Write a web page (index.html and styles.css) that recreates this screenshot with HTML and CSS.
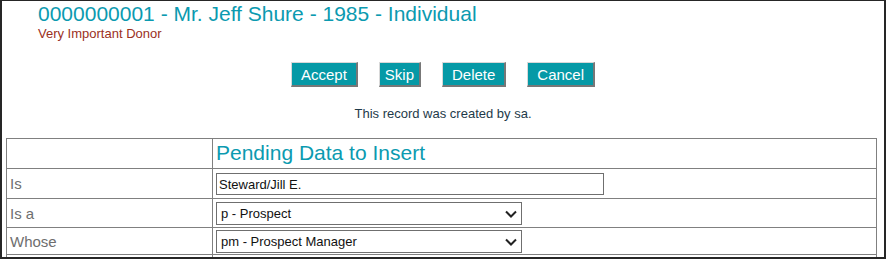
FILE: index.html
```html
<!DOCTYPE html>
<html lang="en">
<head>
    <meta charset="UTF-8">
    <title>Pending Record</title>
    <link rel="stylesheet" href="styles.css">
</head>
<body>
    <div class="frame">
        <div class="header">
            <h1 class="title">0000000001 - Mr. Jeff Shure - 1985 - Individual</h1>
            <div class="subtitle">Very Important Donor</div>
        </div>

        <div class="actions">
            <button class="btn">Accept</button>
            <button class="btn btn-narrow">Skip</button>
            <button class="btn">Delete</button>
            <button class="btn">Cancel</button>
        </div>

        <p class="created">This record was created by sa.</p>

        <table class="pending">
            <tr>
                <td class="label-col"></td>
                <td class="heading">Pending Data to Insert</td>
            </tr>
            <tr>
                <td class="label">Is</td>
                <td><input type="text" class="field" value="Steward/Jill E."></td>
            </tr>
            <tr class="select-row">
                <td class="label">Is a</td>
                <td>
                    <select class="picker">
                        <option>p - Prospect</option>
                        <option>d - Donor</option>
                    </select>
                </td>
            </tr>
            <tr class="select-row tight">
                <td class="label">Whose</td>
                <td>
                    <select class="picker">
                        <option>pm - Prospect Manager</option>
                        <option>sm - Stewardship Manager</option>
                    </select>
                </td>
            </tr>
            <tr>
                <td class="label"></td>
                <td></td>
            </tr>
        </table>
    </div>
</body>
</html>
```

FILE: styles.css
```css
body {
    margin: 0;
    padding: 0;
    background-color: #fff;
    font-family: "Liberation Sans", Arial, sans-serif;
}
.frame {
    height: 259px;
    box-sizing: border-box;
    border: 2px solid #262626;
    border-top-width: 1px;
    overflow: hidden;
}
.header {
    padding: 1px 0 0 36px;
}
.title {
    margin: 0;
    font-size: 21px;
    line-height: 24px;
    font-weight: normal;
    color: #0b9ab0;
}
.subtitle {
    font-size: 13px;
    line-height: 15px;
    color: #9b3022;
}
.actions {
    display: flex;
    justify-content: center;
    gap: 21px;
    margin-top: 21px;
}
.btn {
    height: 25px;
    padding: 0 9px;
    background-color: #0599a6;
    color: #fff;
    font-family: "Liberation Sans", Arial, sans-serif;
    font-size: 15px;
    border-top: 1px solid #d8d8d8;
    border-left: 1px solid #d8d8d8;
    border-right: 2px solid #777;
    border-bottom: 2px solid #777;
    cursor: pointer;
}
.btn-narrow {
    padding: 0 5px;
}
.created {
    margin: 19px 0 0;
    text-align: center;
    font-size: 13px;
    line-height: 15px;
    color: #1e3a4a;
}
.pending {
    border-collapse: collapse;
    width: calc(100% - 11px);
    margin: 17px 0 0 4px;
}
.pending td {
    border: 1px solid #808080;
    padding: 2px 3px 3px;
    vertical-align: middle;
}
.select-row td {
    padding-top: 3px;
    padding-bottom: 2px;
}
.tight td {
    padding-top: 2px;
    padding-bottom: 1px;
}
.label-col {
    width: 199px;
}
.label {
    font-size: 15px;
    color: #6e6e6e;
}
.heading {
    font-size: 21px;
    line-height: 24px;
    color: #0b9ab0;
}
.field {
    display: block;
    box-sizing: border-box;
    width: 388px;
    height: 22px;
    margin: 2px 0 0;
    padding: 0 2px;
    border: 1px solid #6f6f6f;
    font-family: "Liberation Sans", Arial, sans-serif;
    font-size: 13px;
    color: #111;
}
.picker {
    display: block;
    box-sizing: border-box;
    width: 306px;
    height: 23px;
    padding: 0 4px;
    border: 1px solid #6f6f6f;
    border-radius: 0;
    appearance: none;
    -webkit-appearance: none;
    background: #fff url("data:image/svg+xml,%3Csvg xmlns='http://www.w3.org/2000/svg' width='12' height='8'%3E%3Cpath d='M1 1.5l5 5 5-5' fill='none' stroke='%23222' stroke-width='2'/%3E%3C/svg%3E") no-repeat right 4px center;
    font-family: "Liberation Sans", Arial, sans-serif;
    font-size: 13px;
    color: #111;
}
```
